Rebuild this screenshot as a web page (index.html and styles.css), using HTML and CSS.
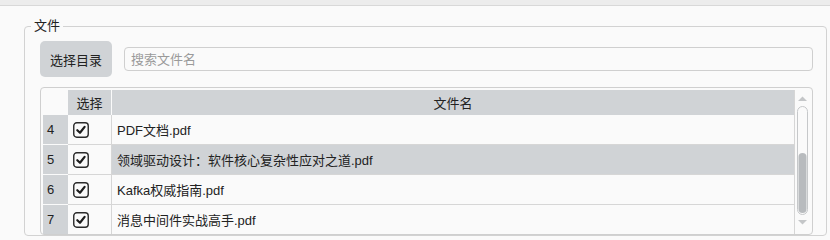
FILE: index.html
```html
<!DOCTYPE html>
<html lang="zh-CN">
<head>
    <meta charset="UTF-8">
    <title>文件</title>
    <link rel="stylesheet" href="styles.css">
</head>
<body>
    <div class="topbar"></div>

    <fieldset class="group">
        <legend>文件</legend>

        <div class="toolbar">
            <button class="btn">选择目录</button>
            <input class="search" type="text" placeholder="搜索文件名">
        </div>

        <div class="grid-frame">
            <div class="grid-view">
                <table class="grid">
                    <thead>
                        <tr>
                            <th class="corner"></th>
                            <th class="col-check">选择</th>
                            <th class="col-name">文件名</th>
                        </tr>
                    </thead>
                    <tbody>
                        <tr>
                            <td class="row-num">4</td>
                            <td class="cell-check"><svg class="check" width="16" height="16" viewBox="0 0 16 16"><rect x="0.75" y="0.75" width="14.5" height="14.5" rx="3"/><path d="M4.3 8.2 L7 10.8 L11.6 4.9"/></svg></td>
                            <td class="cell-name">PDF文档.pdf</td>
                        </tr>
                        <tr class="selected">
                            <td class="row-num">5</td>
                            <td class="cell-check"><svg class="check" width="16" height="16" viewBox="0 0 16 16"><rect x="0.75" y="0.75" width="14.5" height="14.5" rx="3"/><path d="M4.3 8.2 L7 10.8 L11.6 4.9"/></svg></td>
                            <td class="cell-name">领域驱动设计：软件核心复杂性应对之道.pdf</td>
                        </tr>
                        <tr>
                            <td class="row-num">6</td>
                            <td class="cell-check"><svg class="check" width="16" height="16" viewBox="0 0 16 16"><rect x="0.75" y="0.75" width="14.5" height="14.5" rx="3"/><path d="M4.3 8.2 L7 10.8 L11.6 4.9"/></svg></td>
                            <td class="cell-name">Kafka权威指南.pdf</td>
                        </tr>
                        <tr>
                            <td class="row-num">7</td>
                            <td class="cell-check"><svg class="check" width="16" height="16" viewBox="0 0 16 16"><rect x="0.75" y="0.75" width="14.5" height="14.5" rx="3"/><path d="M4.3 8.2 L7 10.8 L11.6 4.9"/></svg></td>
                            <td class="cell-name">消息中间件实战高手.pdf</td>
                        </tr>
                    </tbody>
                </table>
            </div>
            <!-- 세로 스크롤바 -->
            <div class="vscroll">
                <svg width="17" height="144" viewBox="0 0 17 144">
                    <polygon points="3,11 12,11 7.5,6.5" fill="#c4c6c8"/>
                    <rect x="2.5" y="16.5" width="10" height="108" rx="5" fill="none" stroke="#c6c8ca"/>
                    <rect x="3.5" y="63" width="8" height="60" rx="4" fill="#b8bbbe"/>
                    <polygon points="3,130 12,130 7.5,134.5" fill="#c4c6c8"/>
                </svg>
            </div>
        </div>
    </fieldset>
</body>
</html>
```

FILE: styles.css
```css
body {
    font-family: "Liberation Sans", "Noto Sans CJK SC", sans-serif;
    font-size: 13px;
    color: #222;
    margin: 0;
    padding: 0;
    background-color: #fafafa;
    overflow: hidden;
}
.topbar {
    height: 5px;
    background-color: #ececec;
    border-bottom: 1px solid #d8d8d8;
}

/* 그룹 박스 */
.group {
    margin: 12px 3px 0 24px;
    padding: 7px 13px 0 15px;
    border: 1px solid #d2d2d2;
    border-radius: 4px;
}
.group legend {
    margin-left: -9px;
    padding: 0 3px;
    line-height: 16px;
}

.toolbar {
    display: flex;
    align-items: center;
}
.btn {
    font: inherit;
    color: #222;
    height: 36px;
    width: 72px;
    padding: 0;
    border: none;
    border-radius: 5px;
    background-color: #d0d3d6;
}
.search {
    flex: 1;
    margin-left: 12px;
    height: 24px;
    box-sizing: border-box;
    padding: 0 6px;
    font: inherit;
    border: 1px solid #cfcfcf;
    border-radius: 4px;
    background-color: #fafafa;
}
.search::placeholder {
    color: #9a9a9a;
}

/* 테이블 */
.grid-frame {
    display: flex;
    margin-top: 10px;
    height: 148px;
    box-sizing: border-box;
    padding: 2px 0 0 2px;
    border: 1px solid #cfcfcf;
    border-radius: 4px;
}
.grid-view {
    flex: 1;
    height: 144px;
    overflow: hidden;
}
.grid {
    width: 100%;
    border-collapse: separate;
    border-spacing: 0;
}
.grid th {
    height: 25px;
    padding: 0;
    font-weight: normal;
    text-align: center;
}
.grid .corner {
    width: 25px;
}
.grid .col-check {
    width: 43px;
    background-color: #d0d3d6;
    border-right: 1px solid #fafafa;
}
.grid .col-name {
    background-color: #d0d3d6;
}
.grid td {
    height: 29px;
    padding: 0;
    border-bottom: 1px solid #d6d6d6;
}
.grid .row-num {
    background-color: #d0d3d6;
    border-bottom-color: #fafafa;
    padding-left: 4px;
}
.grid .cell-check {
    border-right: 1px solid #d6d6d6;
    padding-left: 5px;
    line-height: 0;
}
.grid .cell-name {
    padding-left: 5px;
}
.grid .selected .cell-name {
    background-color: #d0d3d6;
}
.check rect {
    fill: #fafafa;
    stroke: #2b2b2b;
    stroke-width: 1.4;
}
.check path {
    fill: none;
    stroke: #1e1e1e;
    stroke-width: 2.2;
    stroke-linecap: round;
    stroke-linejoin: round;
}

.vscroll {
    width: 17px;
    border-left: 1px solid #d6d6d6;
    line-height: 0;
}
```
